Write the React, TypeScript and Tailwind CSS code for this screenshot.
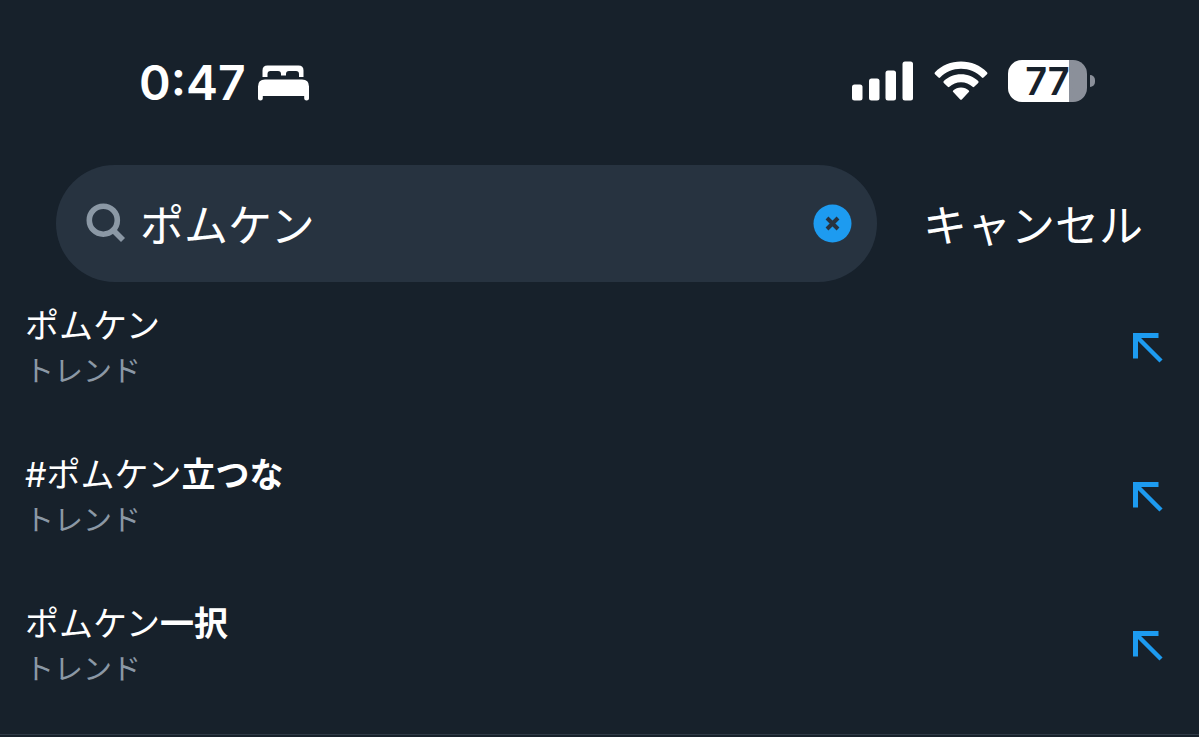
const SUGGESTIONS = [
  { typed: "ポムケン", rest: "" },
  { typed: "#ポムケン", rest: "立つな" },
  { typed: "ポムケン", rest: "一択" },
];

const BedIcon = () => (
  <svg width="52" height="36" viewBox="0 0 52 36" fill="#fff" aria-hidden="true">
    <path d="M4.500 12V5.500q0-5 5-5h31q5 0 5 5V12H41V9q0-3-3-3h-7q-3 0-3 3v1.500h-5V9q0-3-3-3h-7.500q-3 0-3 3v3z" />
    <path d="M0 21.500q0-7 7-7h37q7 0 7 7v12q0 2-2.400 2t-2.400-2V31H4.800v2.500q0 2-2.400 2T0 33.500z" />
  </svg>
);

const SignalIcon = () => (
  <svg width="62" height="40" viewBox="0 0 62 40" fill="#fff" aria-hidden="true">
    <rect x="0" y="23.500" width="10.500" height="16" rx="2.500" />
    <rect x="17" y="17.500" width="10.500" height="22" rx="2.500" />
    <rect x="33.500" y="9.500" width="10.500" height="30" rx="2.500" />
    <rect x="50.500" y="0.500" width="10.500" height="39" rx="2.500" />
  </svg>
);

const WifiIcon = () => (
  <svg width="54" height="40" viewBox="0 0 54 40" fill="#fff" aria-hidden="true">
    <path d="M27 .5c10 0 19.500 4 26 10.700q1 1 0 2L49.500 16.600q-.8.7-1.600 0C42.500 11 35 7.800 27 7.800S11.500 11 6.100 16.600q-.8.7-1.600 0L1 13.200q-1-1 0-2C7.500 4.500 17 .5 27 .5z" />
    <path d="M27 13.200c6.700 0 12.700 2.600 17.200 6.900q.9.900 0 1.800l-4 3.900q-.8.700-1.600 0c-3-2.900-7.100-4.600-11.600-4.600s-8.600 1.700-11.600 4.600q-.8.700-1.600 0l-4-3.900q-.9-.9 0-1.800c4.500-4.300 10.500-6.900 17.200-6.900z" />
    <path d="M27 26.400c3 0 5.700 1.100 7.800 3q.9.900 0 1.700l-7 7.300q-.8.800-1.600 0l-7-7.300q-.9-.8 0-1.700c2.100-1.900 4.800-3 7.800-3z" />
  </svg>
);

const Battery = () => (
  <div className="flex items-center gap-[3px]">
    <div className="flex h-[42px] w-[79px] items-center justify-center rounded-[14px] bg-linear-to-r from-white from-77% to-[#8b909a] to-77% font-['Inter'] text-[38px] font-semibold leading-none text-[#17212b]">
      77
    </div>
    <div className="h-3 w-[5px] rounded-r-full bg-[#8b909a]" />
  </div>
);

const StatusBar = () => (
  <header className="flex h-[165px] items-center justify-between pl-[139px] pr-[104px]">
    <div className="flex items-center gap-3">
      <span className="font-['Inter'] text-5xl font-semibold">0:47</span>
      <BedIcon />
    </div>
    <div className="flex items-center gap-5 pb-1">
      <SignalIcon />
      <WifiIcon />
      <Battery />
    </div>
  </header>
);

const SearchBar = () => (
  <form className="flex items-center px-14">
    <div className="flex h-[117px] min-w-0 flex-1 items-center rounded-full bg-[#273340] pl-[30px] pr-[25px]">
      <svg
        width="40"
        height="40"
        viewBox="0 0 40 40"
        fill="none"
        stroke="#8b98a5"
        className="overflow-visible"
        aria-hidden="true"
      >
        <circle cx="17.300" cy="16.200" r="14" strokeWidth="5.600" />
        <path d="M26.500 25.500 37 36" strokeWidth="5.600" />
      </svg>
      <input
        type="text"
        aria-label="検索"
        defaultValue="ポムケン"
        className="ml-[14px] min-w-0 flex-1 bg-transparent pt-1 text-[44px] leading-[64px] outline-none"
      />
      <button type="button" aria-label="クリア">
        <svg width="39" height="39" viewBox="0 0 39 39" aria-hidden="true">
          <circle cx="19.500" cy="19.500" r="19" fill="#1d9bf0" />
          <path d="m14 14 11 11m0-11L14 25" stroke="#273340" strokeWidth="4" />
        </svg>
      </button>
    </div>
    <button type="button" className="ml-[46px] pt-1 text-[44px] leading-[64px]">
      キャンセル
    </button>
  </form>
);

const ArrowIcon = () => (
  <svg width="30" height="30" viewBox="0 0 30 30" fill="none" stroke="#1d9bf0" aria-hidden="true">
    <path d="M25.500 2.500h-23v23" strokeWidth="5" />
    <path d="m3 3 25 25" strokeWidth="4.500" />
  </svg>
);

const App = () => {
  return (
    <div className="min-h-screen bg-[#17212b] font-['Inter','Noto_Sans_CJK_JP',sans-serif] text-white">
      <StatusBar />
      <SearchBar />
      <ul className="mt-[5px] border-b border-[#2f3a46]">
        {SUGGESTIONS.map(({ typed, rest }) => (
          <li key={typed + rest} className="flex h-[149px] items-start justify-between pl-[25px] pr-9 pt-4">
            <div>
              <p className="text-[34px] leading-[46px]">
                {typed}
                <b>{rest}</b>
              </p>
              <p className="text-[29px] leading-[46px] text-[#8b98a5]">トレンド</p>
            </div>
            <button type="button" aria-label="検索ボックスに入力" className="mt-[30px]">
              <ArrowIcon />
            </button>
          </li>
        ))}
      </ul>
    </div>
  );
};

export default App;
